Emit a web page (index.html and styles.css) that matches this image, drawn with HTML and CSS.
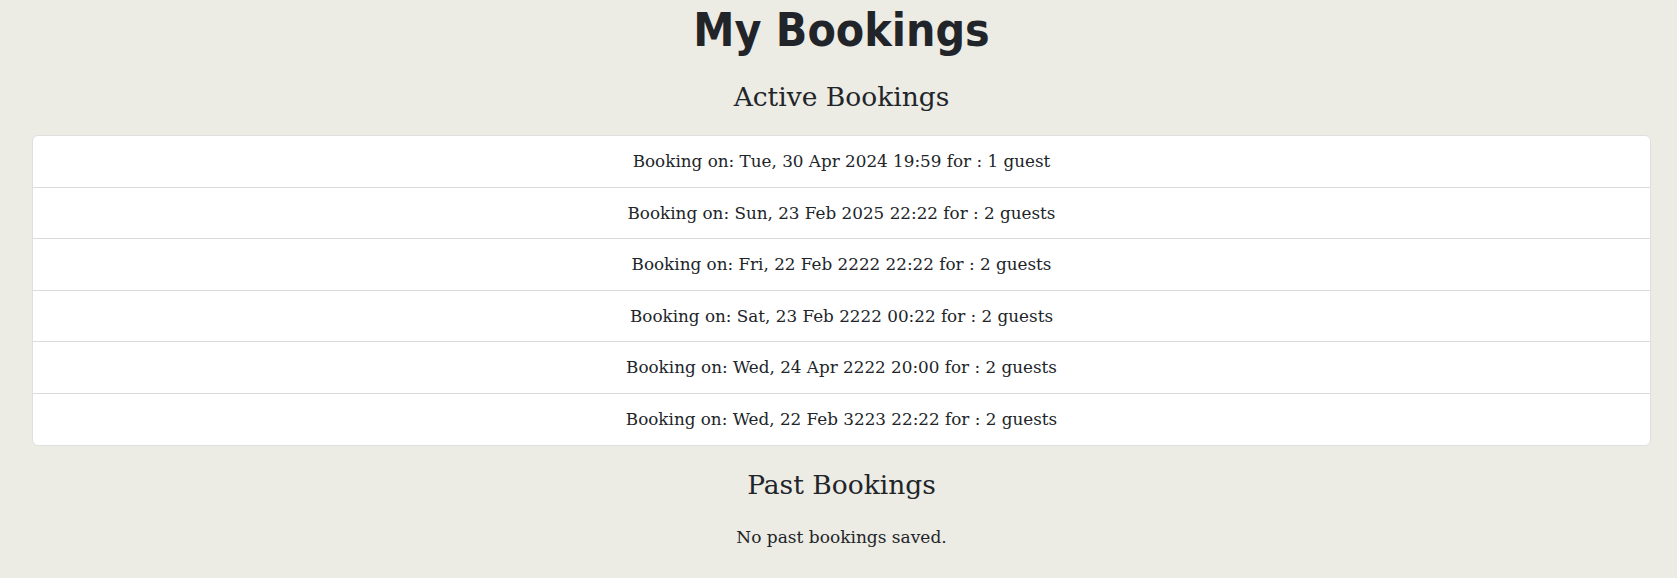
FILE: index.html
```html
<!DOCTYPE html>
<html lang="en">
<head>
<meta charset="utf-8">
<title>My Bookings</title>
<link rel="stylesheet" href="styles.css">
</head>
<body>
<main class="page">
  <h1 class="title">My Bookings</h1>
  <h2 class="section-title">Active Bookings</h2>
  <ul class="booking-list">
    <li class="booking-item">Booking on: Tue, 30 Apr 2024 19:59 for : 1 guest</li>
    <li class="booking-item">Booking on: Sun, 23 Feb 2025 22:22 for : 2 guests</li>
    <li class="booking-item">Booking on: Fri, 22 Feb 2222 22:22 for : 2 guests</li>
    <li class="booking-item">Booking on: Sat, 23 Feb 2222 00:22 for : 2 guests</li>
    <li class="booking-item">Booking on: Wed, 24 Apr 2222 20:00 for : 2 guests</li>
    <li class="booking-item">Booking on: Wed, 22 Feb 3223 22:22 for : 2 guests</li>
  </ul>
  <h2 class="section-title past">Past Bookings</h2>
  <p class="empty">No past bookings saved.</p>
</main>
</body>
</html>
```
FILE: styles.css
```css
html, body {
  margin: 0;
  padding: 0;
  background: #ecebe4;
  color: #212529;
}
.page {
  padding: 0 26px 0 32px;
  text-align: center;
  font-family: "DejaVu Serif", serif;
}
.title {
  margin: 0;
  padding-top: 3px;
  font-family: "DejaVu Sans Condensed", "DejaVu Sans", sans-serif;
  font-weight: bold;
  font-size: 46px;
  line-height: 55.5px;
}
.section-title {
  margin: 22.3px 0 22.2px;
  font-weight: normal;
  font-size: 26.5px;
  line-height: 32px;
}
.booking-list {
  list-style: none;
  margin: 0;
  padding: 0;
  background: #fff;
  border: 1px solid #dfdfdf;
  border-radius: 6px;
  display: flex;
  flex-direction: column;
}
.booking-item {
  padding: 12px 16px;
  font-size: 16.8px;
  line-height: 26.6px;
  border-top: 1px solid #d8dcdf;
}
.booking-item:first-child {
  border-top: none;
}
.section-title.past {
  margin: 23.8px 0 0;
}
.empty {
  margin: 22.8px 0 0;
  font-size: 17px;
  line-height: 27px;
}
```
